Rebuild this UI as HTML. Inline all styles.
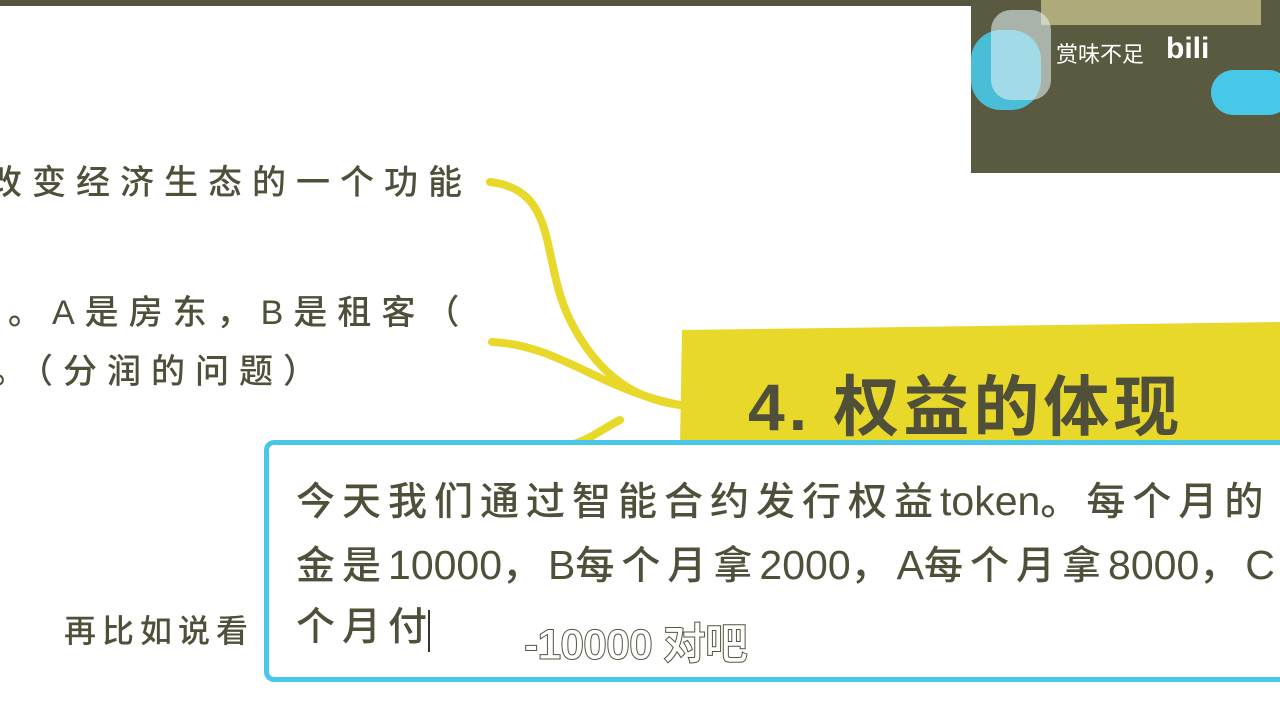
<!DOCTYPE html>
<html><head><meta charset="utf-8"><style>
body{margin:0;width:1280px;height:720px;overflow:hidden;background:#fff;position:relative;font-family:"Liberation Sans","Noto Sans CJK SC",sans-serif;color:#4f4f3a}
.t{position:absolute;white-space:nowrap;font-size:34px;letter-spacing:10px;line-height:1;font-weight:500}
.b{position:absolute;white-space:nowrap;font-size:39px;letter-spacing:7px;line-height:1;font-weight:500}
.l{letter-spacing:0;font-size:41px}
</style></head><body>
<div style="position:absolute;left:0;top:0;width:972px;height:6px;background:#55553f"></div>
<div style="position:absolute;left:971px;top:0;width:309px;height:173px;background:#5a5a40;overflow:hidden">
 <div style="position:absolute;left:0;top:30px;width:70px;height:80px;background:#48c8e8;border-radius:30px;opacity:.9"></div>
 <div style="position:absolute;left:240px;top:70px;width:80px;height:45px;background:#48c8e8;border-radius:30px"></div>
 <div style="position:absolute;left:70px;top:0;width:220px;height:25px;background:#e8e0a0;opacity:.6"></div>
 <div style="position:absolute;left:20px;top:10px;width:60px;height:90px;background:#ddeef2;opacity:.6;border-radius:20px"></div>
 <div style="position:absolute;left:85px;top:37px;color:#fff;font-size:22px">赏味不足</div>
 <div style="position:absolute;left:195px;top:32px;color:#fff;font-size:30px;font-weight:bold">bili</div>
</div>
<svg style="position:absolute;left:0;top:0" width="1280" height="720">
 <g fill="none" stroke="#e8d82a" stroke-width="8" stroke-linecap="round">
  <path d="M490 182 C560 190 540 260 570 320 C600 380 640 400 680 405"/>
  <path d="M492 342 C560 345 600 390 680 405"/>
  <path d="M620 420 C600 430 590 440 570 445"/>
 </g>
 <path d="M682 330 L1280 322 L1280 445 L680 445 Z" fill="#e8d82a"/>
</svg>
<div class="t" style="left:-12px;top:166px">改变经济生态的一个功能</div>
<div class="t" style="left:8px;top:296px">。A是房东，B是租客（</div>
<div class="t" style="left:-8px;top:355px">。（分润的问题）</div>
<div class="t" style="left:64px;top:615px;font-size:32px;letter-spacing:6px">再比如说看</div>
<div style="position:absolute;left:748px;top:374px;font-size:66px;line-height:1;font-weight:bold;letter-spacing:4px;white-space:nowrap">4. 权益的体现</div>
<div style="position:absolute;left:264px;top:440px;width:1016px;height:232px;border:5px solid #48c8e8;border-right:none;border-radius:10px 0 0 10px;background:#fff"></div>
<div class="b" style="left:296px;top:481px;width:984px;overflow:hidden">今天我们通过智能合约发行权益<span class="l">token</span>。每个月的</div>
<div class="b" style="left:296px;top:545px;width:984px;overflow:hidden">金是<span class="l">10000</span>，<span class="l">B</span>每个月拿<span class="l">2000</span>，<span class="l">A</span>每个月拿<span class="l">8000</span>，<span class="l">C</span></div>
<div class="b" style="left:296px;top:608px">个月付</div>
<div style="position:absolute;left:428px;top:610px;width:2px;height:42px;background:#333"></div>
<div style="position:absolute;left:524px;top:610px;font-size:43px;font-weight:bold;font-family:'Liberation Sans','Noto Sans CJK SC',sans-serif;color:#fff;-webkit-text-stroke:1px #55553f;white-space:nowrap;letter-spacing:-1px">-10000 对吧</div>
</body></html>
